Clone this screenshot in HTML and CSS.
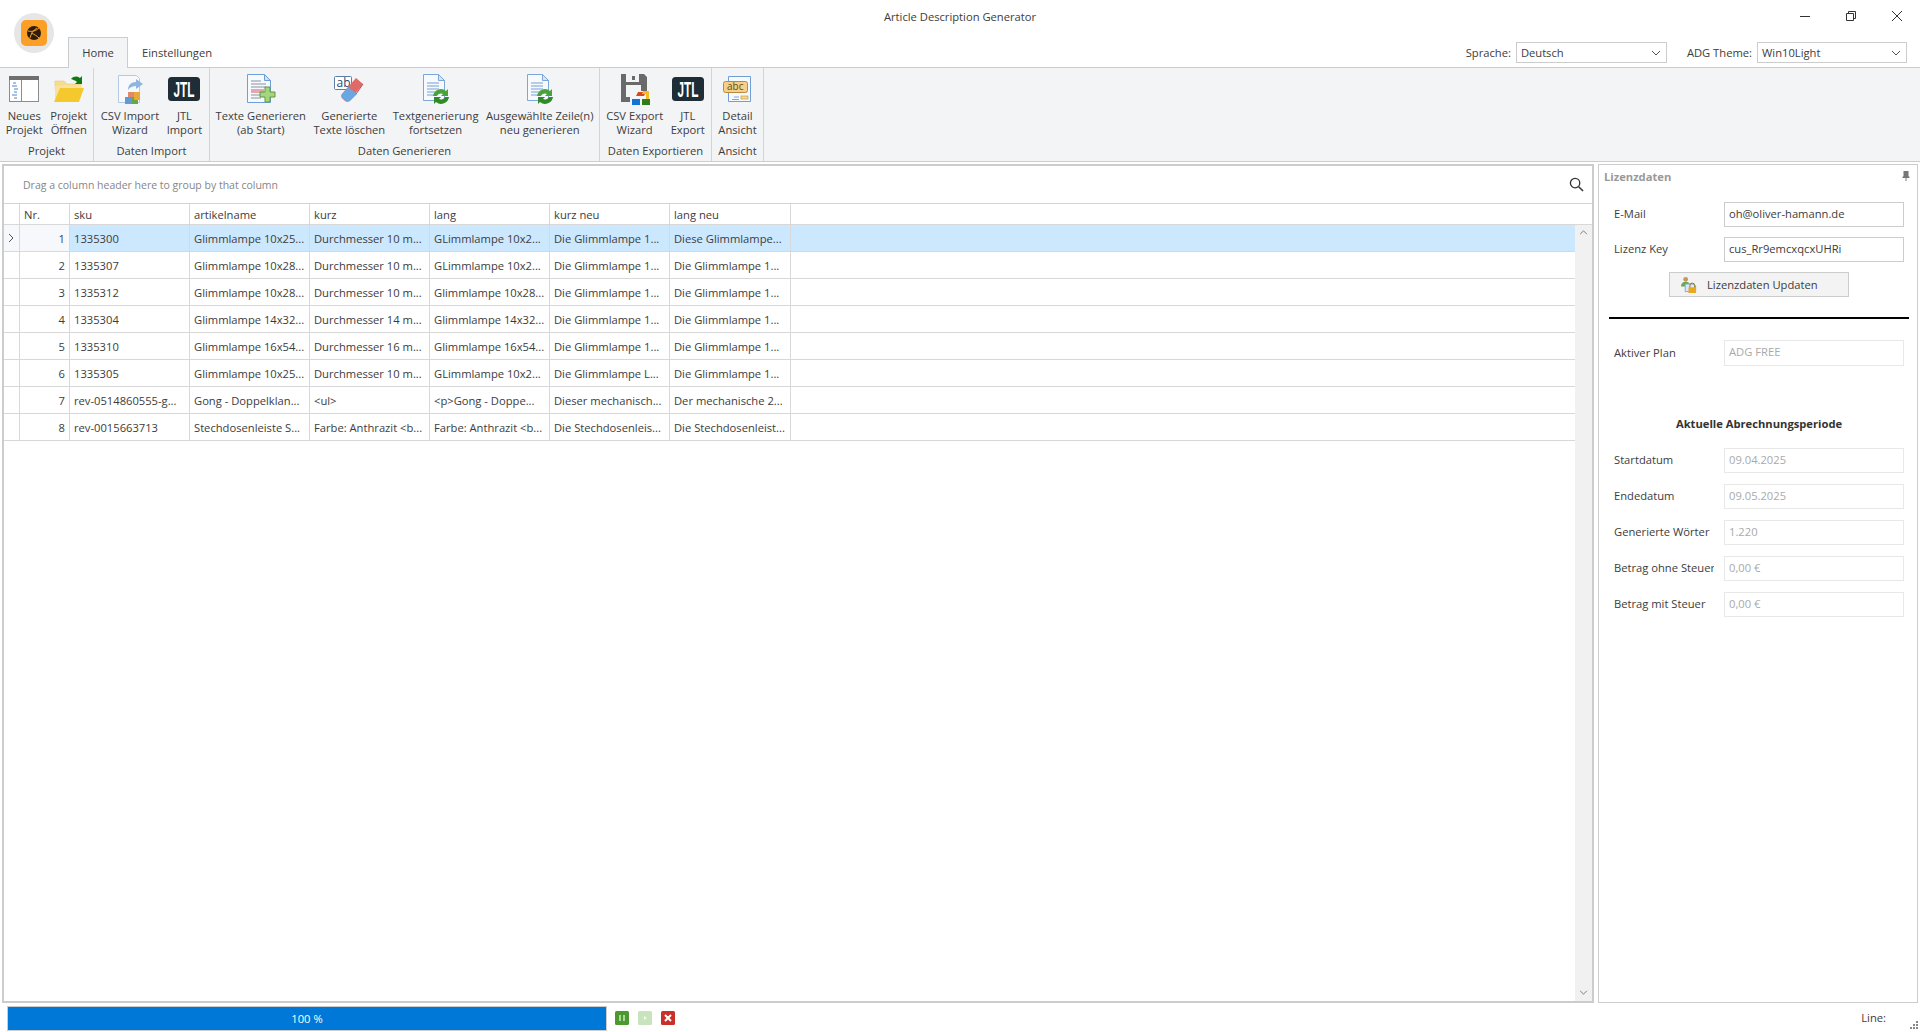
FILE: index.html
```html
<!DOCTYPE html>
<html lang="de">
<head>
<meta charset="utf-8">
<title>Article Description Generator</title>
<link rel="stylesheet" href="styles.css">
</head>
<body>
<svg class="sprite" xmlns="http://www.w3.org/2000/svg">
  <symbol id="i-new" viewBox="0 0 32 32">
    <rect x="1.5" y="3.5" width="29" height="25" fill="#fff" stroke="#8c8c8c"/>
    <rect x="1" y="3" width="30" height="4" fill="#6f6f6f"/>
    <rect x="13" y="7" width="1" height="21" fill="#8c8c8c"/>
    <path d="M5 10h3M4 13h5M6 16h4M6 19h3M4 22h5M6 25h3" stroke="#4d86c6" stroke-width="1.2" fill="none"/>
  </symbol>
  <symbol id="i-open" viewBox="0 0 32 32">
    <path d="M2 8h9l3 3h14v5H2z" fill="#f7dc8f" stroke="#e8c56a" stroke-width=".5"/>
    <path d="M2 27V13h6l3-1h17v4H8z" fill="#f8e2a0"/>
    <path d="M7 15h24l-5 14H1z" fill="#f5c92e"/>
    <path d="M18 6c3-3 6-3 9-1l2-2v8h-7l2-2c-2-2-4-2-6-3z" fill="#127a12"/>
  </symbol>
  <symbol id="i-csvin" viewBox="0 0 32 32">
    <path d="M4.500 2.500h18l3 3v24h-21z" fill="#f7f9fd" stroke="#b4c9e6"/>
    <path d="M14 17c0-5 3-8 8-8V6l7 5-7 5v-3c-3 0-6 1-8 4z" fill="#8fb6e0"/>
    <rect x="11" y="24" width="7" height="7" fill="#5f9bd8"/>
    <rect x="18" y="23" width="6" height="8" fill="#6aa83a"/>
    <rect x="14" y="19" width="6" height="5" fill="#e08a6a"/>
    <rect x="20" y="19" width="6" height="8" fill="#e8a83a"/>
  </symbol>
  <symbol id="i-jtl" viewBox="0 0 32 32">
    <rect x="0" y="4" width="32" height="24" rx="3.500" fill="#1f2d36"/>
    <text x="16" y="24" class="jtl-mark" text-anchor="middle" textLength="21" lengthAdjust="spacingAndGlyphs">JTL</text>
  </symbol>
  <symbol id="i-add" viewBox="0 0 32 32">
    <path d="M2.500 1.500h17l6 6v22h-23z" fill="#f6f9fd" stroke="#6f9fd6"/>
    <path d="M19.500 1.500v6h6z" fill="#cfe0f3" stroke="#6f9fd6"/>
    <path d="M6 8h10M6 11h15M6 14h15" stroke="#8a93a0" fill="none"/>
    <path d="M6 17h13M6 19h13" stroke="#d2565a" fill="none"/>
    <path d="M6 22h10M6 25h10" stroke="#8a93a0" fill="none"/>
    <path d="M20 14h5v5h5v5h-5v5h-5v-5h-5v-5h5z" fill="#a6d57e" stroke="#5c9b3c"/>
  </symbol>
  <symbol id="i-erase" viewBox="0 0 32 32">
    <rect x="1.500" y="3.500" width="17" height="13" rx="1" fill="#fff" stroke="#5b7fa8"/>
    <text x="3.500" y="13.500" class="ab-mark">ab</text>
    <path d="M9 21 23 5l7 6-14 17c-1 1-3 1-4 0l-3-3c-1-1-1-3 0-4z" fill="#e06a68"/>
    <path d="M9 21l6-7 9 7-7 7c-1 1-3 1-4 0l-4-3c-1-1-1-3 0-4z" fill="#6aa6e0"/>
    <path d="M23 21l7-10" stroke="#b54848" fill="none"/>
  </symbol>
  <symbol id="i-redo" viewBox="0 0 32 32">
    <path d="M3.500 1.500h15l6 6v20h-21z" fill="#f6f9fd" stroke="#7ea6d8"/>
    <path d="M18.500 1.500v6h6z" fill="#d6e4f4" stroke="#7ea6d8"/>
    <path d="M7 9h12v2H7zM7 12h12v2H7zM7 15h12v2H7zM7 18h10v2H7zM7 21h9v2H7z" fill="#b6cdea"/>
    <path d="M13 23a8 8 0 0 1 13-5l2-2v7h-7l2-2a4.500 4.500 0 0 0-6 2z" fill="#48a338"/>
    <path d="M29 24a8 8 0 0 1-13 5l-2 2v-7h7l-2 2a4.500 4.500 0 0 0 6-2z" fill="#2f8a2a"/>
  </symbol>
  <symbol id="i-csvout" viewBox="0 0 32 32">
    <path d="M2 1h5v8h13V1h5l3 3v14h-6v-6H7v12h4v5H2z" fill="#6a6a6a"/>
    <rect x="13" y="3" width="3" height="4" fill="#6a6a6a"/>
    <path d="M19 19h8l-2 4h-8z" fill="#d9481c"/>
    <path d="M24 18h6v9h-3v-6h-4z" fill="#f3bb27"/>
    <rect x="13" y="26" width="8" height="6" fill="#1473d4"/>
    <rect x="23" y="26" width="8" height="6" fill="#2f7d1a"/>
  </symbol>
  <symbol id="i-abc" viewBox="0 0 32 32">
    <path d="M6.500 3.500h22v25h-22z" fill="#f6f9fd" stroke="#6f9fd6"/>
    <rect x="1.500" y="8.500" width="24" height="11" rx="2" fill="#f3d08c" stroke="#b98a38"/>
    <text x="5" y="17" class="abc-mark">abc</text>
    <path d="M12 24h5M10 26.500h7" stroke="#7ea6d8" fill="none"/>
    <rect x="19" y="23" width="7" height="3" fill="#f5d890" stroke="#c89b3e" stroke-width=".7"/>
  </symbol>
  <symbol id="i-key" viewBox="0 0 18 18">
    <circle cx="6" cy="3.500" r="2.500" fill="#c8935e"/>
    <path d="M1 11c0-3 2-5 5-5s5 2 5 5z" fill="#69a94a"/>
    <path d="M5.500 8.500h9l2 2v6h-11z" fill="#dbe8f7" stroke="#7ea6d8"/>
    <rect x="9" y="12" width="8" height="6" fill="#e6a91f"/>
    <path d="M10.500 12v-2a2.500 2.500 0 0 1 5 0v2" fill="none" stroke="#8c6a1c"/>
  </symbol>
  <symbol id="i-chev" viewBox="0 0 10 6">
    <path d="M1 1l4 4 4-4" fill="none" stroke="#555" stroke-width="1"/>
  </symbol>
</svg>

<div class="app">
  <header class="titlebar">
    <div></div>
    <div class="title">Article Description Generator</div>
    <div class="winctl">
      <svg class="winicon" viewBox="0 0 12 12"><path d="M1 6.500h10" stroke="#333"/></svg>
      <svg class="winicon" viewBox="0 0 12 12"><path d="M1.500 3.500h7v7h-7zM3.500 3.500v-2h7v7h-2" fill="none" stroke="#333"/></svg>
      <svg class="winicon" viewBox="0 0 12 12"><path d="M1 1l10 10M11 1L1 11" stroke="#333"/></svg>
    </div>
  </header>

  <div class="logo">
    <div class="logo-tile">
      <svg class="logo-mark" viewBox="0 0 16 16">
        <circle cx="8" cy="8" r="7" fill="#2b1c0c"/>
        <path d="M2 6c4 1 8 0 11-3M4 13c1-4 3-8 7-10M5 8c3 1 6 3 8 5" stroke="#f7a11f" fill="none"/>
      </svg>
    </div>
  </div>

  <nav class="tabbar">
    <div class="tab tab-active">Home</div>
    <div class="tab">Einstellungen</div>
    <div class="tab-fill"></div>
    <span class="combo-label">Sprache:</span>
    <div class="combo combo-first"><span>Deutsch</span><svg class="chev"><use href="#i-chev"/></svg></div>
    <span class="combo-label combo-label-2">ADG Theme:</span>
    <div class="combo combo-last"><span>Win10Light</span><svg class="chev"><use href="#i-chev"/></svg></div>
  </nav>

  <section class="ribbon">
    <div class="group g1">
      <div class="btns">
        <div class="rbtn"><svg class="ricon"><use href="#i-new"/></svg><span>Neues<br>Projekt</span></div>
        <div class="rbtn"><svg class="ricon"><use href="#i-open"/></svg><span>Projekt<br>Öffnen</span></div>
      </div>
      <div class="glabel">Projekt</div>
    </div>
    <div class="group g2">
      <div class="btns">
        <div class="rbtn"><svg class="ricon"><use href="#i-csvin"/></svg><span>CSV Import<br>Wizard</span></div>
        <div class="rbtn"><svg class="ricon"><use href="#i-jtl"/></svg><span>JTL<br>Import</span></div>
      </div>
      <div class="glabel">Daten Import</div>
    </div>
    <div class="group g3">
      <div class="btns">
        <div class="rbtn"><svg class="ricon"><use href="#i-add"/></svg><span>Texte Generieren<br>(ab Start)</span></div>
        <div class="rbtn"><svg class="ricon"><use href="#i-erase"/></svg><span>Generierte<br>Texte löschen</span></div>
        <div class="rbtn"><svg class="ricon"><use href="#i-redo"/></svg><span>Textgenerierung<br>fortsetzen</span></div>
        <div class="rbtn"><svg class="ricon"><use href="#i-redo"/></svg><span>Ausgewählte Zeile(n)<br>neu generieren</span></div>
      </div>
      <div class="glabel">Daten Generieren</div>
    </div>
    <div class="group g4">
      <div class="btns">
        <div class="rbtn"><svg class="ricon"><use href="#i-csvout"/></svg><span>CSV Export<br>Wizard</span></div>
        <div class="rbtn"><svg class="ricon"><use href="#i-jtl"/></svg><span>JTL<br>Export</span></div>
      </div>
      <div class="glabel">Daten Exportieren</div>
    </div>
    <div class="group g5">
      <div class="btns">
        <div class="rbtn"><svg class="ricon"><use href="#i-abc"/></svg><span>Detail<br>Ansicht</span></div>
      </div>
      <div class="glabel">Ansicht</div>
    </div>
  </section>

  <main class="main">
    <section class="gridpanel">
      <div class="groupbar">
        <span class="grouphint">Drag a column header here to group by that column</span>
        <svg class="search" viewBox="0 0 16 16"><circle cx="6.500" cy="6.500" r="5" fill="none" stroke="#333" stroke-width="1.400"/><path d="M10.300 10.300L15 15" stroke="#333" stroke-width="1.600"/></svg>
      </div>
      <div class="row head">
        <div class="c"></div><div class="c">Nr.</div><div class="c">sku</div><div class="c">artikelname</div><div class="c">kurz</div><div class="c">lang</div><div class="c">kurz neu</div><div class="c">lang neu</div>
      </div>
      <div class="gridbody">
        <div class="rows">
          <div class="row selected">
            <div class="c ind"><svg class="rowmark" viewBox="0 0 6 10"><path d="M1 1l4 4-4 4" fill="none" stroke="#555"/></svg></div><div class="c num">1</div><div class="c">1335300</div><div class="c">Glimmlampe 10x25...</div><div class="c">Durchmesser 10 m...</div><div class="c">GLimmlampe 10x2...</div><div class="c">Die Glimmlampe 1...</div><div class="c">Diese Glimmlampe...</div>
          </div>
          <div class="row">
            <div class="c ind"></div><div class="c num">2</div><div class="c">1335307</div><div class="c">Glimmlampe 10x28...</div><div class="c">Durchmesser 10 m...</div><div class="c">GLimmlampe 10x2...</div><div class="c">Die Glimmlampe 1...</div><div class="c">Die Glimmlampe 1...</div>
          </div>
          <div class="row">
            <div class="c ind"></div><div class="c num">3</div><div class="c">1335312</div><div class="c">Glimmlampe 10x28...</div><div class="c">Durchmesser 10 m...</div><div class="c">Glimmlampe 10x28...</div><div class="c">Die Glimmlampe 1...</div><div class="c">Die Glimmlampe 1...</div>
          </div>
          <div class="row">
            <div class="c ind"></div><div class="c num">4</div><div class="c">1335304</div><div class="c">Glimmlampe 14x32...</div><div class="c">Durchmesser 14 m...</div><div class="c">Glimmlampe 14x32...</div><div class="c">Die Glimmlampe 1...</div><div class="c">Die Glimmlampe 1...</div>
          </div>
          <div class="row">
            <div class="c ind"></div><div class="c num">5</div><div class="c">1335310</div><div class="c">Glimmlampe 16x54...</div><div class="c">Durchmesser 16 m...</div><div class="c">Glimmlampe 16x54...</div><div class="c">Die Glimmlampe 1...</div><div class="c">Die Glimmlampe 1...</div>
          </div>
          <div class="row">
            <div class="c ind"></div><div class="c num">6</div><div class="c">1335305</div><div class="c">Glimmlampe 10x25...</div><div class="c">Durchmesser 10 m...</div><div class="c">GLimmlampe 10x2...</div><div class="c">Die Glimmlampe L...</div><div class="c">Die Glimmlampe 1...</div>
          </div>
          <div class="row">
            <div class="c ind"></div><div class="c num">7</div><div class="c">rev-0514860555-g...</div><div class="c">Gong - Doppelklan...</div><div class="c">&lt;ul&gt;</div><div class="c">&lt;p&gt;Gong - Doppe...</div><div class="c">Dieser mechanisch...</div><div class="c">Der mechanische 2...</div>
          </div>
          <div class="row">
            <div class="c ind"></div><div class="c num">8</div><div class="c">rev-0015663713</div><div class="c">Stechdosenleiste S...</div><div class="c">Farbe: Anthrazit &lt;b...</div><div class="c">Farbe: Anthrazit &lt;b...</div><div class="c">Die Stechdosenleis...</div><div class="c">Die Stechdosenleist...</div>
          </div>
        </div>
        <div class="scrollbar">
          <svg class="sb-arrow" viewBox="0 0 10 6"><path d="M1 5l4-4 4 4" fill="none" stroke="#666"/></svg>
          <svg class="sb-arrow" viewBox="0 0 10 6"><path d="M1 1l4 4 4-4" fill="none" stroke="#666"/></svg>
        </div>
      </div>
    </section>

    <aside class="dock">
      <div class="docktitle">
        <span>Lizenzdaten</span>
        <svg class="pin" viewBox="0 0 8 10"><path d="M1.500 0h5v5l1 1v1H4.500v3h-1V7H.5V6l1-1z" fill="#777"/></svg>
      </div>
      <div class="form">
        <div class="field"><div class="flabel">E-Mail</div><div class="finput">oh@oliver-hamann.de</div></div>
        <div class="field"><div class="flabel">Lizenz Key</div><div class="finput">cus_Rr9emcxqcxUHRi</div></div>
        <div class="updatebtn"><svg class="keyicon"><use href="#i-key"/></svg><span>Lizenzdaten Updaten</span></div>
        <div class="rule"></div>
        <div class="field field-plan"><div class="flabel">Aktiver Plan</div><div class="finput off">ADG FREE</div></div>
        <div class="period">Aktuelle Abrechnungsperiode</div>
        <div class="stack">
          <div class="field"><div class="flabel">Startdatum</div><div class="finput off">09.04.2025</div></div>
          <div class="field"><div class="flabel">Endedatum</div><div class="finput off">09.05.2025</div></div>
          <div class="field"><div class="flabel">Generierte Wörter</div><div class="finput off">1.220</div></div>
          <div class="field"><div class="flabel">Betrag ohne Steuer</div><div class="finput off">0,00 €</div></div>
          <div class="field"><div class="flabel">Betrag mit Steuer</div><div class="finput off">0,00 €</div></div>
        </div>
      </div>
    </aside>
  </main>

  <footer class="statusbar">
    <div class="progress">100 %</div>
    <div class="stbtns">
      <svg class="stbtn" viewBox="0 0 14 14"><rect width="14" height="14" rx="1.500" fill="#4b9a2f"/><path d="M5 4v6M9 4v6" stroke="#d8f0cc" stroke-width="1.400"/></svg>
      <svg class="stbtn" viewBox="0 0 14 14"><rect width="14" height="14" rx="1.500" fill="#c9e3bd"/><path d="M6 5l3 2-3 2z" fill="#f3f9ef"/></svg>
      <svg class="stbtn" viewBox="0 0 14 14"><rect width="14" height="14" rx="1.500" fill="#c9302a"/><path d="M4 4l6 6M10 4l-6 6" stroke="#fff" stroke-width="2"/></svg>
    </div>
    <div class="stfill"></div>
    <span class="linelabel">Line:</span>
    <svg class="grip" viewBox="0 0 8 8"><path d="M6 0h2v2H6zM3 3h2v2H3zM6 3h2v2H6zM0 6h2v2H0zM3 6h2v2H3zM6 6h2v2H6z" fill="#888"/></svg>
  </footer>
</div>
</body>
</html>
```

FILE: styles.css
```css
* { box-sizing: border-box; }
html, body { margin: 0; height: 100%; overflow: hidden; }
body {
  font-family: "Open Sans", "Noto Sans", sans-serif;
  font-size: 11.2px;
  color: #3c3c3c;
  background: #fff;
}
.sprite { display: none; }
.app { position: relative; height: 100vh; display: flex; flex-direction: column; }

.titlebar { height: 37px; flex: none; display: grid; grid-template-columns: 1fr auto 1fr; }
.title { padding-top: 9px; line-height: 15px; }
.winctl { display: flex; justify-content: flex-end; gap: 34px; padding: 10px 17px 0 0; }
.winicon { width: 12px; height: 12px; }

.logo {
  position: absolute; left: 14px; top: 13px; width: 40px; height: 40px;
  border-radius: 50%; background: #e6e6e6;
  display: flex; align-items: center; justify-content: center;
}
.logo-tile {
  width: 26px; height: 26px; border-radius: 5px; background: #fb9f26;
  display: flex; align-items: center; justify-content: center;
}
.logo-mark { width: 16px; height: 16px; }

.tabbar { height: 30px; flex: none; display: flex; align-items: flex-start; padding-left: 68px; }
.tab { height: 30px; line-height: 31px; padding: 0 14px; }
.tab-active {
  width: 60px; padding: 0; text-align: center;
  background: #f3f4f6; border: 1px solid #ccc; border-bottom: 0; line-height: 29px;
  height: 31px; position: relative; z-index: 1;
}
.tab-fill { flex: 1; }
.combo-label { line-height: 31px; margin-right: 5px; }
.combo-label-2 { margin-left: 20px; }
.combo {
  margin-top: 5px; width: 150px; height: 21px; border: 1px solid #ccc; background: #fff;
  display: flex; align-items: center; justify-content: space-between; padding: 0 5px 0 4px;
}
.combo-first { width: 151px; }
.combo-last { margin-right: 13px; }
.chev { width: 10px; height: 6px; }

.ribbon {
  height: 95px; flex: none; display: flex; background: #f3f4f6;
  border-top: 1px solid #ccc; border-bottom: 1px solid #ccc;
}
.group { border-right: 1px solid #d4d4d4; display: flex; flex-direction: column; flex: none; }
.g1 { width: 94px; }
.g2 { width: 116px; }
.g3 { width: 390px; }
.g4 { width: 112px; }
.g5 { width: 52px; }
.btns { flex: 1; display: flex; justify-content: center; gap: 7.5px; padding-top: 5px; }
.rbtn { display: flex; flex-direction: column; align-items: center; text-align: center; line-height: 14px; white-space: nowrap; }
.ricon { width: 32px; height: 32px; margin-bottom: 4px; flex: none; }
.glabel { text-align: center; line-height: 14px; padding-bottom: 3px; }
.jtl-mark { font-family: "Liberation Sans Narrow", "Liberation Sans", sans-serif; font-weight: 700; font-size: 22px; fill: #fff; }
.ab-mark { font-family: "Open Sans", sans-serif; font-size: 12px; fill: #2b4a70; }
.abc-mark { font-family: "Open Sans", sans-serif; font-size: 10px; fill: #6b4a10; }

.main { flex: 1; min-height: 0; display: flex; gap: 4px; padding: 2px 2px 0; }
.gridpanel { flex: 1; min-width: 0; border: 2px solid #ccc; display: flex; flex-direction: column; }
.groupbar {
  height: 38px; flex: none; border-bottom: 1px solid #d4d4d4;
  display: flex; align-items: center; justify-content: space-between; padding: 0 8px 0 19px;
}
.grouphint { color: #868686; font-size: 10.5px; }
.search { width: 15px; height: 15px; }
.row {
  display: grid; grid-template-columns: 16px 50px 120px 120px 120px 120px 120px 121px;
  height: 27px; line-height: 28px; border-bottom: 1px solid #d8d8d8;
}
.row.head { height: 21px; line-height: 22px; flex: none; }
.c { border-right: 1px solid #d8d8d8; padding-left: 4px; white-space: nowrap; overflow: hidden; }
.ind { padding: 0 2px 0 0; display: flex; align-items: center; justify-content: center; }
.rowmark { width: 6px; height: 10px; }
.num { text-align: right; padding: 0 4px 0 0; }
.selected { background: #cce8ff; }
.selected .ind, .selected .num { background: #f6f8fb; }
.gridbody { flex: 1; min-height: 0; display: flex; }
.rows { flex: 1; min-width: 0; }
.scrollbar {
  width: 17px; flex: none; background: #f1f1f1;
  display: flex; flex-direction: column; justify-content: space-between; align-items: center; padding: 5px 0 6px;
}
.sb-arrow { width: 9px; height: 5px; }

.dock { width: 320px; flex: none; border: 1px solid #ccc; }
.docktitle {
  height: 24px; display: flex; align-items: center; justify-content: space-between; padding: 0 7px 2px 5px;
  color: #999; font-weight: 700;
}
.pin { width: 8px; height: 10px; margin-top: -1px; }
.form { padding: 13px 13px 0 15px; }
.field { display: grid; grid-template-columns: 100px 180px; column-gap: 10px; align-items: center; margin-bottom: 10px; }
.flabel { white-space: nowrap; overflow: hidden; line-height: 15px; margin-top: -2px; }
.finput { height: 25px; line-height: 21px; border: 1px solid #ccc; padding-left: 4px; background: #fff; }
.finput.off { border-color: #e8e8e8; color: #aaa; }
.updatebtn {
  margin-left: 55px; width: 180px; height: 25px; background: #f3f3f3; border: 1px solid #ccc;
  display: flex; align-items: center; padding: 0 0 1px 10px; gap: 10px;
}
.keyicon { width: 17px; height: 17px; }
.rule { margin: 20px 0 21px -5px; width: 300px; height: 2px; background: #000; }
.field-plan { margin-bottom: 0; }
.field-plan .finput { height: 26px; }
.period { margin-top: 48px; height: 20px; line-height: 20px; text-align: center; font-weight: 700; color: #333; }
.stack { margin-top: 14px; display: flex; flex-direction: column; gap: 1px; }

.statusbar { height: 29px; flex: none; display: flex; align-items: center; padding: 0 2px 0 7px; }
.progress {
  width: 600px; height: 25px; margin-top: 2px; line-height: 23px; text-align: center; color: #fff;
  background: #0078d7; border: 1px solid #ccc;
}
.stbtns { display: flex; gap: 9px; margin-left: 8px; }
.stbtn { width: 14px; height: 14px; }
.stfill { flex: 1; }
.linelabel { margin-right: 24px; }
.grip { width: 8px; height: 8px; align-self: flex-end; margin-bottom: 3px; }
```
